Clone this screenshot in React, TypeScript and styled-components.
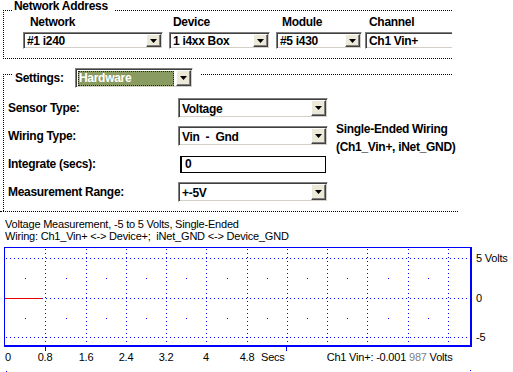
import styled, { createGlobalStyle } from 'styled-components';

const GlobalStyle = createGlobalStyle`
  html, body {
    margin: 0;
    padding: 0;
    background: #fff;
  }
  body {
    font-family: "Liberation Sans", Arial, sans-serif;
    color: #000;
  }
`;

const Page = styled.div`
  width: 513px;
  height: 372px;
  overflow: hidden;
`;

const Group = styled.div<{ $top: number; $bottom?: boolean }>`
  box-sizing: border-box;
  width: 449px;
  margin: ${p => p.$top}px 0 0 3px;
  border-top: 1px dotted #000;
  border-left: 1px dotted #000;
  border-bottom: ${p => (p.$bottom ? '1px dotted #000' : 'none')};
  padding-bottom: ${p => (p.$bottom ? 9 : 5)}px;
`;

const Legend = styled.div<{ $lift: number; $height: number; $indent: number }>`
  display: flex;
  align-items: center;
  width: fit-content;
  height: ${p => p.$height}px;
  margin: -${p => p.$lift}px 0 0 ${p => p.$indent}px;
  padding: 0 7px 0 2px;
  background: #fff;
  font-size: 12px;
  letter-spacing: -0.3px;
  font-weight: bold;
  line-height: 13px;
`;

const LegendLabel = styled.span<{ $width?: number }>`
  width: ${p => (p.$width ? `${p.$width}px` : 'auto')};
`;

const FieldRow = styled.div`
  display: flex;
  margin-top: 3px;
  padding-left: 19px;
  overflow: hidden;
`;

const Field = styled.div<{ $gap: number }>`
  display: flex;
  flex-direction: column;
  flex: none;
  margin-left: ${p => p.$gap}px;
`;

const FieldLabel = styled.div<{ $indent: number }>`
  padding-left: ${p => p.$indent}px;
  margin-bottom: 3px;
  font-size: 12px;
  letter-spacing: -0.3px;
  font-weight: bold;
  line-height: 13px;
`;

const Combo = styled.div<{ $width: number; $height: number }>`
  box-sizing: border-box;
  display: flex;
  flex: none;
  width: ${p => p.$width}px;
  height: ${p => p.$height}px;
  padding: 1px;
  background: #fff;
  border: 1px solid;
  border-color: #808080 #fff #fff #808080;
  box-shadow: inset 1px 1px 0 #404040, inset -1px -1px 0 #d4d0c8;
`;

const ComboValue = styled.div<{ $selected?: boolean }>`
  flex: 1;
  display: flex;
  align-items: center;
  min-width: 0;
  margin: 1px ${p => (p.$selected ? 2 : 0)}px 0 1px;
  padding-left: 1px;
  font-size: 12px;
  letter-spacing: -0.3px;
  font-weight: bold;
  white-space: pre;
  overflow: hidden;
  background: ${p => (p.$selected ? '#8a9b62' : 'transparent')};
  color: ${p => (p.$selected ? '#fff' : '#000')};
  outline: ${p => (p.$selected ? '1px dotted #222' : 'none')};
  outline-offset: -1px;
`;

const ArrowButton = styled.div`
  box-sizing: border-box;
  display: flex;
  align-items: center;
  justify-content: center;
  flex: none;
  width: 15px;
  background: #ece9d8;
  border: 1px solid;
  border-color: #fff #404040 #404040 #fff;
  box-shadow: inset -1px -1px 0 #808080;
`;

const SettingsGrid = styled.div`
  display: grid;
  grid-template-columns: 170px 150px auto;
  grid-template-rows: repeat(4, 28px);
  align-items: center;
  padding: 6px 0 0 4px;
  font-size: 12px;
  letter-spacing: -0.3px;
  font-weight: bold;
`;

const RowLabel = styled.div`
  grid-column: 1;
`;

const Control = styled.div`
  grid-column: 2;
  display: flex;
`;

const TextInput = styled.div`
  box-sizing: border-box;
  width: 146px;
  height: 17px;
  margin-left: 2px;
  padding-left: 3px;
  border: 1px solid #000;
  border-left-width: 2px;
  line-height: 15px;
`;

const SideNote = styled.div`
  grid-column: 3;
  grid-row: 2 / span 2;
  align-self: start;
  margin: -2px 0 0 8px;
  line-height: 18px;
  white-space: nowrap;
`;

const Separator = styled.div`
  width: 458px;
  border-top: 1px dotted #000;
`;

const Description = styled.div`
  padding: 6px 0 0 5px;
  font-size: 11px;
  letter-spacing: -0.2px;
  line-height: 12px;
  white-space: pre;
`;

const ChartRow = styled.div`
  display: flex;
  margin: 5px 0 0 4px;
`;

const ValueAxis = styled.div`
  position: relative;
  width: 37px;
  height: 100px;
  margin-left: 4px;
`;

const AxisText = styled.span`
  position: absolute;
  font-size: 11px;
  letter-spacing: -0.2px;
  line-height: 12px;
  white-space: pre;
`;

const TimeAxis = styled.div`
  position: relative;
  display: flex;
  height: 12px;
  margin: 4px 0 0 4px;
  padding-left: 257px;
  font-size: 11px;
  letter-spacing: -0.2px;
  line-height: 12px;
  white-space: pre;
`;

const Readout = styled.span`
  margin-left: 42px;
`;

const Faded = styled.span`
  color: #808080;
`;

const DropArrow = () => (
  <svg width="7" height="4" viewBox="0 0 7 4">
    <polygon points="0,0 7,0 3.5,4" fill="#000" />
  </svg>
);

type ComboProps = { value: string; width: number; height: number; selected?: boolean };

const ComboBox = ({ value, width, height, selected }: ComboProps) => (
  <Combo $width={width} $height={height}>
    <ComboValue $selected={selected}>{value}</ComboValue>
    <ArrowButton>
      <DropArrow />
    </ArrowButton>
  </Combo>
);

const networkFields = [
  { label: 'Network', value: '#1 i240', width: 140, gap: 0, indent: 7 },
  { label: 'Device', value: '1 i4xx Box', width: 101, gap: 6, indent: 4 },
  { label: 'Module', value: '#5 i430', width: 86, gap: 6, indent: 6 },
  { label: 'Channel', value: 'Ch1 Vin+', width: 130, gap: 3, indent: 4 },
];

const gridX = Array.from({ length: 12 }, (_, i) => Math.round(1 + i * 40.25));
const levels = [
  { label: '5 Volts', y: 11 },
  { label: '0', y: 51 },
  { label: '-5', y: 90 },
];

const Chart = () => {
  const blue = '#0000ff';
  return (
    <svg width="468" height="100" style={{ overflow: 'visible', flex: 'none' }}>
      {levels.map(l => (
        <line key={l.y} x1="2" x2="466" y1={l.y + 0.5} y2={l.y + 0.5}
          stroke={blue} strokeDasharray="1 3" />
      ))}
      {gridX.slice(1).map(x => (
        <line key={x} x1={x + 0.5} x2={x + 0.5} y1="2" y2="98"
          stroke={blue} strokeDasharray="1 3" />
      ))}
      {gridX.slice(1).map((x, i) => {
        const mid = Math.round((gridX[i] + x) / 2);
        return [31, 71].map(y => (
          <rect key={`${x}-${y}`} x={mid} y={y} width="1" height="1" fill={blue} />
        ));
      })}
      <line x1="1" x2="38" y1="51.5" y2="51.5" stroke="#e80000" />
      <rect x="0" y="0" width="468" height="1" fill={blue} />
      <rect x="0" y="0" width="1" height="100" fill={blue} />
      <rect x="466" y="0" width="2" height="100" fill={blue} />
      <rect x="0" y="98" width="468" height="2" fill={blue} />
      <rect x="41" y="100" width="1" height="4" fill={blue} />
      <rect x="282" y="100" width="1" height="4" fill={blue} />
      <rect x="2" y="124" width="1" height="1" fill={blue} />
      <rect x="466" y="123" width="1" height="1" fill={blue} />
    </svg>
  );
};

export default function App() {
  const ticks = gridX.slice(0, 7).map((x, i) => ({
    x,
    label: parseFloat((i * 0.8).toFixed(1)).toString(),
  }));

  return (
    <Page>
      <GlobalStyle />
      <Group $top={10} $bottom>
        <Legend $lift={11} $height={13} $indent={8}>Network Address</Legend>
        <FieldRow>
          {networkFields.map(f => (
            <Field key={f.label} $gap={f.gap}>
              <FieldLabel $indent={f.indent}>{f.label}</FieldLabel>
              <ComboBox value={f.value} width={f.width} height={17} />
            </Field>
          ))}
        </FieldRow>
      </Group>

      <Group $top={15}>
        <Legend $lift={7} $height={20} $indent={9}>
          <LegendLabel $width={60}>Settings:</LegendLabel>
          <ComboBox value="Hardware" width={118} height={20} selected />
        </Legend>
        <SettingsGrid>
          <RowLabel>Sensor Type:</RowLabel>
          <Control>
            <ComboBox value="Voltage" width={150} height={20} />
          </Control>
          <RowLabel>Wiring Type:</RowLabel>
          <Control>
            <ComboBox value="Vin  -  Gnd" width={150} height={20} />
          </Control>
          <RowLabel>Integrate (secs):</RowLabel>
          <Control>
            <TextInput>0</TextInput>
          </Control>
          <RowLabel>Measurement Range:</RowLabel>
          <Control>
            <ComboBox value="+-5V" width={150} height={20} />
          </Control>
          <SideNote>
            Single-Ended Wiring
            <br />
            (Ch1_Vin+, iNet_GND)
          </SideNote>
        </SettingsGrid>
      </Group>
      <Separator />

      <Description>
        Voltage Measurement, -5 to 5 Volts, Single-Ended
        <br />
        Wiring: Ch1_Vin+ &lt;-&gt; Device+;  iNet_GND &lt;-&gt; Device_GND
      </Description>

      <ChartRow>
        <Chart />
        <ValueAxis>
          {levels.map(l => (
            <AxisText key={l.label} style={{ top: l.y - 6, left: 0 }}>{l.label}</AxisText>
          ))}
        </ValueAxis>
      </ChartRow>

      <TimeAxis>
        {ticks.map((t, i) => (
          <AxisText
            key={t.label}
            style={{ left: t.x, top: 0, transform: i === 0 ? 'none' : 'translateX(-50%)' }}
          >
            {t.label}
          </AxisText>
        ))}
        <span>Secs</span>
        <Readout>
          Ch1 Vin+: -0.001 <Faded>987</Faded> Volts
        </Readout>
      </TimeAxis>
    </Page>
  );
}
